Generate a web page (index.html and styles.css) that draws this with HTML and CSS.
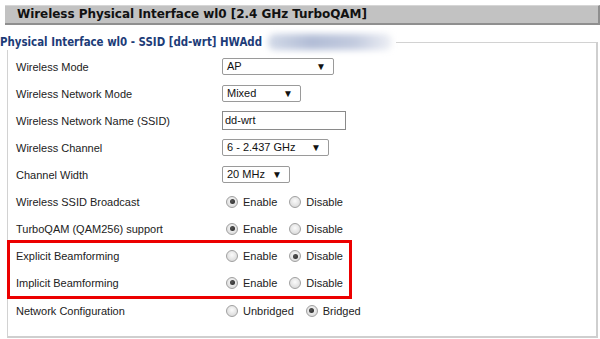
FILE: index.html
```html
<!DOCTYPE html>
<html>
<head>
<meta charset="utf-8">
<link rel="stylesheet" href="styles.css">
</head>
<body>
<div class="header">Wireless Physical Interface wl0 [2.4 GHz TurboQAM]</div>
<fieldset class="panel">
  <legend class="legend">Physical Interface wl0 - SSID [dd-wrt] HWAdd<span class="blur"></span></legend>
  <div class="row">
    <div class="label">Wireless Mode</div>
    <div class="ctrl"><span class="select w112">AP</span></div>
  </div>
  <div class="row">
    <div class="label">Wireless Network Mode</div>
    <div class="ctrl"><span class="select w79">Mixed</span></div>
  </div>
  <div class="row">
    <div class="label">Wireless Network Name (SSID)</div>
    <div class="ctrl"><span class="input">dd-wrt</span></div>
  </div>
  <div class="row">
    <div class="label">Wireless Channel</div>
    <div class="ctrl"><span class="select w107">6 - 2.437 GHz</span></div>
  </div>
  <div class="row">
    <div class="label">Channel Width</div>
    <div class="ctrl"><span class="select w68">20 MHz</span></div>
  </div>
  <div class="row">
    <div class="label">Wireless SSID Broadcast</div>
    <div class="ctrl"><span class="radio on"></span><span class="opt">Enable</span><span class="radio"></span><span class="opt">Disable</span></div>
  </div>
  <div class="row">
    <div class="label">TurboQAM (QAM256) support</div>
    <div class="ctrl"><span class="radio on"></span><span class="opt">Enable</span><span class="radio"></span><span class="opt">Disable</span></div>
  </div>
  <div class="highlight">
    <div class="row">
      <div class="label">Explicit Beamforming</div>
      <div class="ctrl"><span class="radio"></span><span class="opt">Enable</span><span class="radio on"></span><span class="opt">Disable</span></div>
    </div>
    <div class="row">
      <div class="label">Implicit Beamforming</div>
      <div class="ctrl"><span class="radio on"></span><span class="opt">Enable</span><span class="radio"></span><span class="opt">Disable</span></div>
    </div>
  </div>
  <div class="row">
    <div class="label">Network Configuration</div>
    <div class="ctrl"><span class="radio"></span><span class="opt">Unbridged</span><span class="radio on"></span><span class="opt">Bridged</span></div>
  </div>
</fieldset>
</body>
</html>
```

FILE: styles.css
```css
html, body {
  margin: 0;
  padding: 0;
  background: #fff;
}
body {
  width: 600px;
  height: 339px;
  overflow: hidden;
  font-family: "Liberation Sans", Arial, sans-serif;
  font-size: 11px;
  color: #222;
}
.header {
  margin: 5px 0 0 5px;
  height: 17px;
  background: #c2c2c2;
  border-top: 1px solid #d6d6d6;
  border-bottom: 2px solid #8f8f8f;
  border-right: 2px solid #8f8f8f;
  padding-left: 12px;
  font-family: "DejaVu Sans", Verdana, sans-serif;
  font-weight: bold;
  font-size: 12px;
  line-height: 17px;
  color: #111;
  letter-spacing: -0.05px;
}
.panel {
  margin: 9px 0 0 7px;
  width: 591px;
  box-sizing: border-box;
  border: 1px solid #d2d2d2;
  border-right: 2px solid #cfcfcf;
  border-bottom: 2px solid #cfcfcf;
  padding: 3px 0 12px 8px;
  min-width: 0;
}
.legend {
  margin-left: -16px;
  padding: 0 4px 0 0;
  font-family: "DejaVu Sans Condensed", "DejaVu Sans", sans-serif;
  font-weight: bold;
  font-size: 11.4px;
  color: #1d3c78;
  display: flex;
  align-items: center;
  height: 16px;
}
.blur {
  display: inline-block;
  width: 124px;
  height: 16px;
  margin-left: 6px;
  background: linear-gradient(90deg, #d3dae8 0%, #b2bdd6 35%, #c3cbdf 70%, #eef0f5 100%);
  filter: blur(3px);
  border-radius: 7px;
}
.row {
  display: grid;
  grid-template-columns: 206px auto;
  align-items: center;
  height: 27px;
}
.label {
  white-space: nowrap;
}
.ctrl {
  display: flex;
  align-items: center;
}
.select, .input {
  position: relative;
  height: 17px;
  box-sizing: border-box;
  border: 1px solid #9a9a9a;
  border-radius: 2px;
  padding-left: 4px;
  line-height: 15px;
  font-size: 11px;
  color: #111;
  background: #fff;
}
.select::after {
  content: "\25BC";
  position: absolute;
  right: 7px;
  top: 0;
  font-size: 10px;
  line-height: 15px;
  color: #111;
}
.input {
  width: 124px;
  height: 19px;
  line-height: 17px;
  padding-left: 2px;
  border-color: #8a8a8a;
  border-radius: 0;
}
.w112 { width: 112px; }
.w79 { width: 79px; }
.w107 { width: 107px; }
.w68 { width: 68px; }
.radio {
  width: 12px;
  height: 12px;
  box-sizing: border-box;
  border-radius: 50%;
  border: 1px solid #a0a0a0;
  background: radial-gradient(circle at 50% 40%, #fbfbfb 0%, #dedede 70%, #cfcfcf 100%);
  margin-left: 4px;
  position: relative;
}
.radio.on::after {
  content: "";
  position: absolute;
  left: 2.5px;
  top: 2.5px;
  width: 5px;
  height: 5px;
  border-radius: 50%;
  background: radial-gradient(circle at 40% 40%, #555 0%, #222 100%);
}
.opt {
  margin-left: 5px;
  margin-right: 8px;
  min-width: 34px;
}
.highlight {
  box-sizing: border-box;
  border: 3px solid #ec0000;
  margin: -2px 0 -2px -9px;
  padding-left: 6px;
  width: 345px;
}
.highlight .row:first-child {
  height: 26px;
}
```
